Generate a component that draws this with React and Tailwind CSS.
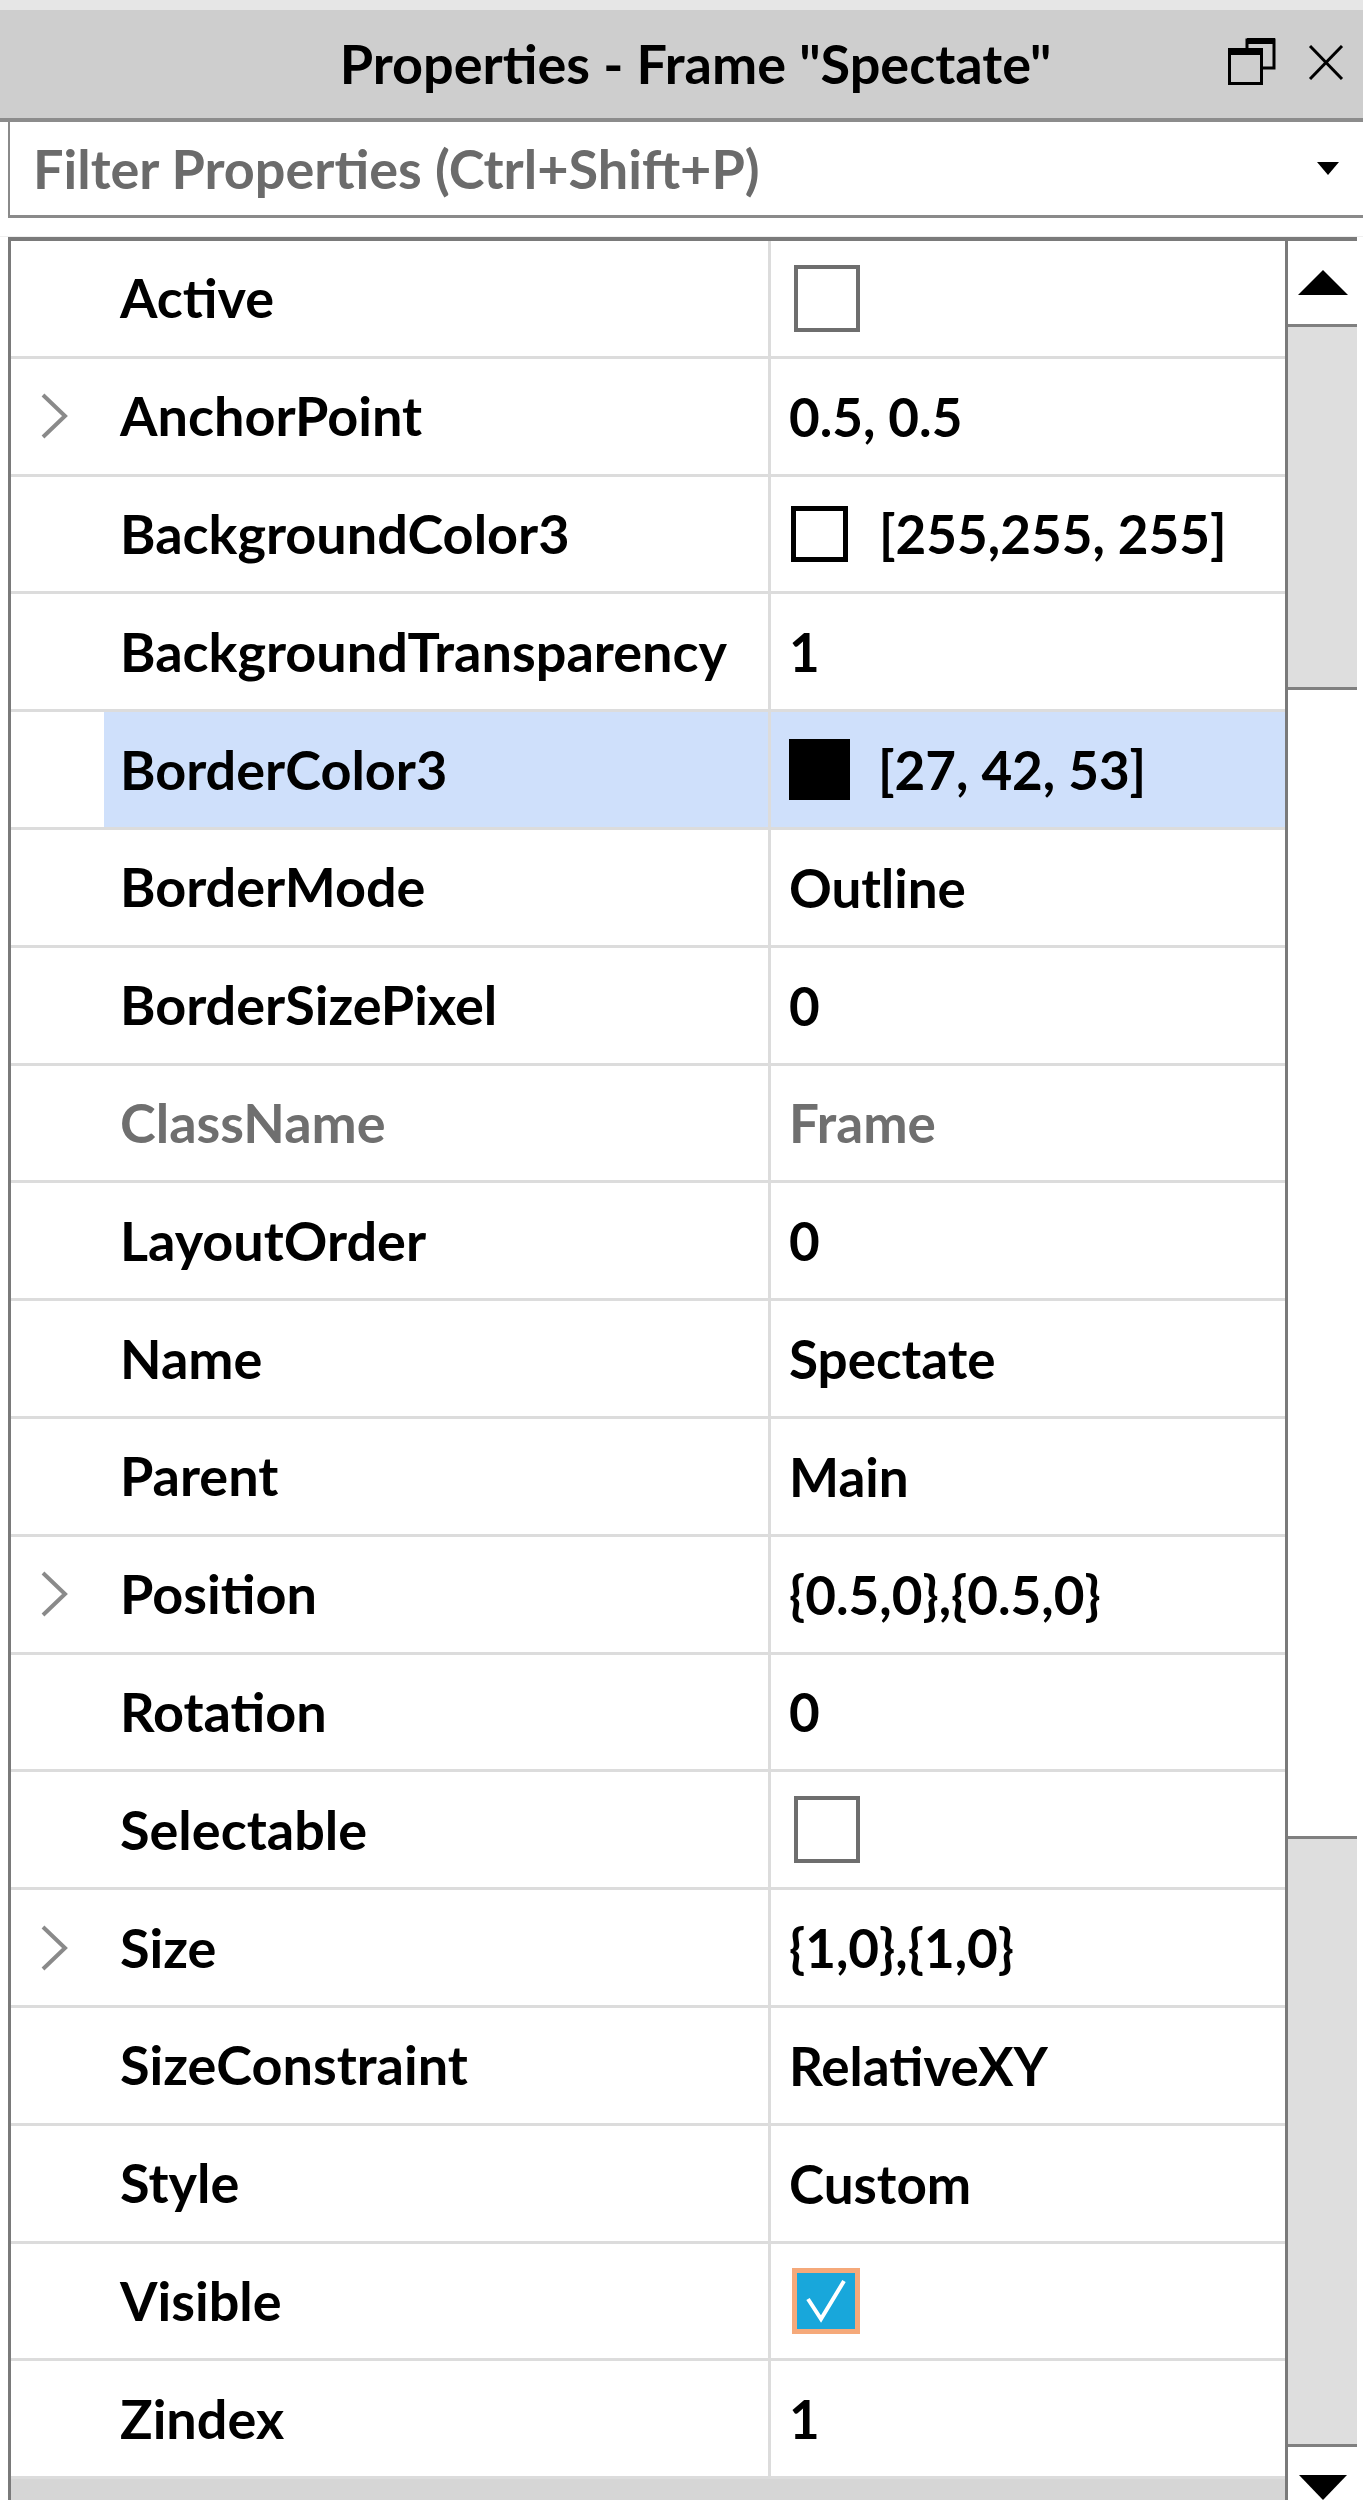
import React from "react";

const rows = [
  { name: "Active", type: "check" },
  { name: "AnchorPoint", value: "0.5, 0.5", expand: true },
  { name: "BackgroundColor3", value: "[255,255, 255]", swatch: "white" },
  { name: "BackgroundTransparency", value: "1" },
  { name: "BorderColor3", value: "[27, 42, 53]", swatch: "black", selected: true },
  { name: "BorderMode", value: "Outline" },
  { name: "BorderSizePixel", value: "0" },
  { name: "ClassName", value: "Frame", muted: true },
  { name: "LayoutOrder", value: "0" },
  { name: "Name", value: "Spectate" },
  { name: "Parent", value: "Main" },
  { name: "Position", value: "{0.5,0},{0.5,0}", expand: true },
  { name: "Rotation", value: "0" },
  { name: "Selectable", type: "check" },
  { name: "Size", value: "{1,0},{1,0}", expand: true },
  { name: "SizeConstraint", value: "RelativeXY" },
  { name: "Style", value: "Custom" },
  { name: "Visible", type: "checked" },
  { name: "Zindex", value: "1" },
];

function Chevron() {
  return (
    <svg width="28" height="46" viewBox="0 0 28 46">
      <polyline points="3,2 25,23 3,44" fill="none" stroke="#8a8a8a" strokeWidth="4" />
    </svg>
  );
}

function Value({ row }) {
  if (row.type === "check") {
    return <div className="ml-[5px] w-[66px] h-[67px] border-[4px] border-[#6e6e6e] bg-white" />;
  }
  if (row.type === "checked") {
    return (
      <div className="ml-[3px] w-[68px] h-[66px] border-[5px] border-[#f5a97a] bg-[#18a7db] flex items-center justify-center">
        <svg width="44" height="48" viewBox="0 0 44 48">
          <polyline points="4,22 17,42 40,4" fill="none" stroke="white" strokeWidth="4" />
        </svg>
      </div>
    );
  }
  return (
    <div className={`flex items-center text-[53px] ${row.muted ? "text-[#6f6f6f]" : "text-black"}`}>
      {row.swatch === "white" && (
        <div className="ml-[2px] mr-[31px] w-[57px] h-[56px] border-[5px] border-black bg-white" />
      )}
      {row.swatch === "black" && <div className="mr-[28px] w-[61px] h-[61px] bg-black" />}
      <span>{row.value}</span>
    </div>
  );
}

function Row({ row }) {
  return (
    <div className="flex h-[117.8px] border-b-[3px] border-[#dcdcdc]">
      <div className="w-[93px] flex items-center justify-center pr-[8px]">
        {row.expand && <Chevron />}
      </div>
      <div
        className={`w-[664px] flex items-center pl-[16px] ${row.selected ? "bg-[#cfe0fb]" : ""} ${
          row.muted ? "text-[#6f6f6f]" : "text-black"
        }`}
      >
        {row.name}
      </div>
      <div className="w-[3px] bg-[#dcdcdc]" />
      <div className={`flex-1 flex items-center pl-[18px] ${row.selected ? "bg-[#cfe0fb]" : ""}`}>
        <Value row={row} />
      </div>
    </div>
  );
}

function ScrollBar() {
  return (
    <div className="w-[78px] flex flex-col border-l-[3px] border-[#7a7a7a] bg-white">
      <div className="h-[83px] flex items-center justify-center pr-[6px]">
        <svg width="50" height="25" viewBox="0 0 50 25">
          <polygon points="25,0 50,25 0,25" fill="black" />
        </svg>
      </div>
      <div className="mr-[6px] h-[366px] border-y-[3px] border-[#808080] bg-[#dedede]" />
      <div className="h-[1146px]" />
      <div className="mr-[6px] h-[611px] border-y-[3px] border-[#808080] bg-[#dedede]" />
      <div className="flex-1 flex items-end justify-center pr-[6px]">
        <svg width="48" height="25" viewBox="0 0 48 25">
          <polygon points="0,0 48,0 24,25" fill="black" />
        </svg>
      </div>
    </div>
  );
}

export default function App() {
  return (
    <div
      className="w-[1363px] h-[2500px] bg-white overflow-hidden flex flex-col text-[54px] font-bold leading-none"
      style={{ fontFamily: "Lato, 'Open Sans', sans-serif" }}
    >
      {/* window title */}
      <div className="h-[10px] bg-[#e6e6e6]" />
      <div className="h-[108px] bg-[#cecece] flex items-center relative">
        <div className="flex-1 text-center pl-[28px] text-black">
          Properties - Frame "Spectate"
        </div>
        <div className="absolute left-[1228px] top-[28px]">
          <svg width="48" height="47" viewBox="0 0 48 47">
            <path d="M19 10 V2 H46 V30 H35" fill="none" stroke="black" strokeWidth="3" />
            <rect x="19" y="0" width="28" height="6" fill="black" />
            <rect x="1.5" y="11.5" width="32" height="34" fill="none" stroke="black" strokeWidth="3" />
            <rect x="0" y="10" width="35" height="7" fill="black" />
          </svg>
        </div>
        <div className="absolute left-[1308px] top-[35px]">
          <svg width="36" height="35" viewBox="0 0 36 35">
            <line x1="2" y1="1" x2="34" y2="34" stroke="black" strokeWidth="3" />
            <line x1="34" y1="1" x2="2" y2="34" stroke="black" strokeWidth="3" />
          </svg>
        </div>
      </div>
      <div className="h-[4px] bg-[#8c8c8c]" />

      {/* filter box */}
      <div className="ml-[8px] h-[96px] bg-white border-l-[2px] border-b-[3px] border-[#8a8a8a] flex items-center justify-between pl-[23px] pr-[24px]">
        <span className="text-[#6b6b6b]">Filter Properties (Ctrl+Shift+P)</span>
        <svg width="22" height="13" viewBox="0 0 22 13">
          <polygon points="0,0 22,0 11,13" fill="black" />
        </svg>
      </div>
      <div className="h-[19px] bg-white border-b border-[#efefef]" />

      {/* property grid */}
      <div className="ml-[8px] mr-[6px] h-[4px] bg-[#7a7a7a]" />
      <div className="flex flex-1">
        <div className="ml-[8px] w-[1277px] flex flex-col border-l-[3px] border-[#7a7a7a]">
          {rows.map((r) => (
            <Row key={r.name} row={r} />
          ))}
          <div className="flex-1 bg-[#d6d6d6]" />
        </div>
        <ScrollBar />
      </div>
    </div>
  );
}
